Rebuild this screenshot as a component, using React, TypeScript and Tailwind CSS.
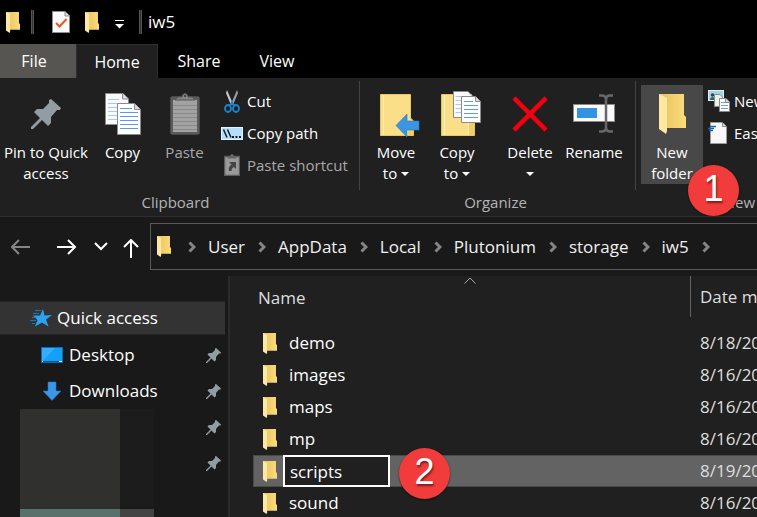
import type { ReactNode } from "react";

function Folder({ className }: { className: string }) {
  return (
    <svg viewBox="0 0 27 40" preserveAspectRatio="none" className={className} aria-hidden="true">
      <defs>
        <linearGradient id="folderBack" x1="0" x2="1" y1="0" y2="0">
          <stop offset="0.3" stopColor="#eec968" />
          <stop offset="1" stopColor="#fbdc7c" />
        </linearGradient>
      </defs>
      <path d="M0 0H25V21L27 23V34H0Z" fill="url(#folderBack)" />
      <path d="M0 0L8 4V37L7 40L0 35Z" fill="#ffe8a2" />
    </svg>
  );
}

function PinIcon({ className }: { className: string }) {
  return (
    <svg viewBox="0 0 30 30" className={className} aria-hidden="true">
      <path d="M20 0L30 9L29 11L26 11L20 18L20 24L17 27L11 21L2 30H0V28L9 19L3 13L6 10L12 10L18 4V1Z" fill="#929ca3" />
    </svg>
  );
}

function Sheets({ className }: { className: string }) {
  return (
    <svg viewBox="0 0 36 42" className={className} aria-hidden="true">
      <path d="M.5 .5H18L23.500 6V31.500H.5Z" fill="#fafafa" stroke="#8a8a8a" />
      <path d="M17.500 .5V6H23.500" fill="#ddd" stroke="#8a8a8a" />
      <path d="M3 6.500H14M3 10.500H20M3 14.500H20M3 18.500H20M3 22.500H20M3 26.500H20" stroke="#a9c9f5" />
      <path d="M12.500 10.500H29.500L35.500 16.500V41.500H12.500Z" fill="#fff" stroke="#8a8a8a" />
      <path d="M29.500 10.500V16.500H35.500" fill="#ddd" stroke="#8a8a8a" />
      <path d="M15 15.500H27M15 19.500H33M15 23.500H33M15 27.500H33M15 31.500H33M15 35.500H33" stroke="#5b97f0" strokeWidth="1.200" />
    </svg>
  );
}

function Clipboard() {
  return (
    <svg viewBox="0 0 30 42" className="h-[42px] w-[30px]" aria-hidden="true">
      <rect x=".5" y="3.500" width="29" height="38" rx="2" fill="#5b5b5b" stroke="#484848" />
      <rect x="3" y="7" width="24" height="32" fill="#a2a2a2" />
      <path d="M3 12.500H27M3 16.500H27M3 20.500H27M3 24.500H27M3 28.500H27M3 32.500H27M3 36.500H27" stroke="#888" />
      <path d="M5 7L8 4H12C12 -.5 18 -.5 18 4H22L25 7Z" fill="#858585" stroke="#555" />
      <circle cx="15" cy="3" r="1" fill="#333" />
    </svg>
  );
}

function Scissors() {
  return (
    <svg viewBox="0 0 16 23" className="h-[23px] w-4" aria-hidden="true">
      <path d="M3 0L9 14L7 15L2 3Z" fill="#c4c8cc" />
      <path d="M13 0L7 14L9 15L14 3Z" fill="#9aa0a6" />
      <g fill="none" stroke="#1a84cf" strokeWidth="1.800">
        <ellipse cx="4" cy="18.500" rx="3" ry="3.500" />
        <ellipse cx="12" cy="18.500" rx="3" ry="3.500" />
        <path d="M6 16L8 12L10 16" />
      </g>
    </svg>
  );
}

function PathIcon() {
  return (
    <svg viewBox="0 0 22 13" className="h-[13px] w-[22px]" aria-hidden="true">
      <rect x=".5" y=".5" width="21" height="12" fill="#b5defb" stroke="#e3f4ff" />
      <path d="M2.500 2.500L6 10.500M6.500 2.500L10 10.500" stroke="#10202c" strokeWidth="1.500" />
      <path d="M11 9H13V11H11ZM14.500 9H16.500V11H14.500ZM18 9H20V11H18Z" fill="#10202c" />
    </svg>
  );
}

function ShortcutIcon() {
  return (
    <svg viewBox="0 0 16 22" className="h-[22px] w-4" aria-hidden="true">
      <rect x=".5" y="2.500" width="15" height="19" fill="#9a9a9a" stroke="#5d5d5d" strokeWidth="1.500" />
      <path d="M3 4.500L5 2H6C6 -.5 10 -.5 10 2H11L13 4.500Z" fill="#666" />
      <path d="M5 8H12V15L10 13C8 14 7.500 15 7.500 17H5C4 14 5.500 12 7.500 10.500Z" fill="#454545" />
    </svg>
  );
}

function FolderSheet({ children }: { children: ReactNode }) {
  return (
    <svg viewBox="0 0 42 46" className="ml-2 h-[46px] w-[42px] shrink-0" aria-hidden="true">
      <path d="M1.500 3.500H31.500V27L34.500 30V44.500H1.500Z" fill="#fbdf88" stroke="#e8c664" />
      <path d="M4.500 4V44M28.500 30V44" stroke="#fff0bd" />
      <path d="M29 31H34V44H29Z" fill="#f3cc68" />
      {children}
    </svg>
  );
}

function MoveIcon() {
  return (
    <FolderSheet>
      <path d="M17 34.500L28 23V30H40V39H28V46Z" fill="#3a96e0" stroke="#2a7dc2" strokeWidth=".6" />
    </FolderSheet>
  );
}

function CopyToIcon() {
  return (
    <FolderSheet>
      <path d="M13.500 .5H28L32.500 5V26.500H13.500Z" fill="#fafafa" stroke="#8a8a8a" />
      <path d="M15.500 5.500H25M15.500 9.500H30M15.500 13.500H30M15.500 17.500H30M15.500 21.500H30" stroke="#a9c9f5" />
      <path d="M21.500 5.500H35.500L40.500 10.500V31.500H21.500Z" fill="#fff" stroke="#8a8a8a" />
      <path d="M35.500 5.500V10.500H40.500" fill="#ddd" stroke="#8a8a8a" />
      <path d="M24 10.500H33M24 14.500H38M24 18.500H38M24 22.500H38M24 26.500H38" stroke="#5b97f0" />
    </FolderSheet>
  );
}

function DeleteIcon() {
  return (
    <svg viewBox="0 0 36 36" className="h-9 w-9" aria-hidden="true">
      <path d="M2 2L34 34M34 2L2 34" stroke="#a5000c" strokeWidth="5" />
      <path d="M2 2L34 34M34 2L2 34" stroke="#ec0412" strokeWidth="4" />
    </svg>
  );
}

function RenameIcon() {
  return (
    <svg viewBox="0 0 42 39" className="h-[39px] w-[42px]" aria-hidden="true">
      <rect x=".5" y="10.500" width="41" height="17" fill="#fafafa" stroke="#8a8a8a" />
      <rect x="4" y="14" width="20" height="10" fill="#3393e3" />
      <path d="M26 1.500H29C32 1.500 33 3 33 6V33C33 36 32 37.500 29 37.500H26M40 1.500H37C34 1.500 33 3 33 6M33 33C33 36 34 37.500 37 37.500H40" fill="none" stroke="#686868" strokeWidth="2.500" />
    </svg>
  );
}

function NewItemIcon() {
  return (
    <svg viewBox="0 0 22 22" className="h-[22px] w-[22px]" aria-hidden="true">
      <rect x=".5" y=".5" width="15" height="10" fill="#9fd4ee" stroke="#e3edf2" />
      <path d="M2 10C2 6 7 6 7 10Z" fill="#2d6a4c" />
      <circle cx="4.500" cy="5" r="1.700" fill="#4d3b2d" />
      <path d="M6.500 4.500H12L14.500 7V16.500H6.500Z" fill="#eee" stroke="#8a8a8a" />
      <path d="M11.500 8.500H18L21.500 12V21.500H11.500Z" fill="#fff" stroke="#8a8a8a" />
      <path d="M13 12.500H18M13 15.500H20M13 18.500H20" stroke="#6d9ce0" />
      <path d="M17.500 8.500V12.500H21.500" fill="#ddd" stroke="#8a8a8a" />
    </svg>
  );
}

function EasyAccessIcon() {
  return (
    <svg viewBox="0 0 22 22" className="h-[22px] w-[22px]" aria-hidden="true">
      <path d="M2.500 .5H14L18.500 5V21.500H2.500Z" fill="#f7f7f7" stroke="#9a9a9a" />
      <path d="M14.500 .5V4.500H18.500" fill="#ddd" stroke="#8a8a8a" />
      <path d="M2 4.500H8M0 6.500H6M1 8.500H5" stroke="#1467b4" strokeWidth="1.300" />
    </svg>
  );
}

function Caret() {
  return (
    <svg viewBox="0 0 8 4" className="h-1 w-2" aria-hidden="true">
      <path d="M0 0H8L4 4Z" fill="#fff" />
    </svg>
  );
}

function Crumb() {
  return (
    <svg viewBox="0 0 8 12" className="ml-[13px] mr-3 h-3 w-2 shrink-0" aria-hidden="true">
      <path d="M1.500 1.500L6 6L1.500 10.500" fill="none" stroke="#858585" strokeWidth="3" />
    </svg>
  );
}

function BigButton({ icon, className, children }: { icon: ReactNode; className: string; children: ReactNode }) {
  return (
    <button className={`flex h-[99px] shrink-0 flex-col items-center whitespace-nowrap text-[15px] leading-[21px] ${className}`}>
      <span className="flex h-[57px] w-full items-center justify-center">{icon}</span>
      {children}
    </button>
  );
}

function SmallButton({ icon, children, muted }: { icon: ReactNode; children: ReactNode; muted?: boolean }) {
  return (
    <button className={`flex h-8 items-center gap-1 whitespace-nowrap text-[15px] ${muted ? "text-[#a9a9a9]" : "text-white"}`}>
      <span className="flex w-[22px] justify-center">{icon}</span>
      {children}
    </button>
  );
}

function Group({ label, className, children }: { label: string; className: string; children: ReactNode }) {
  return (
    <section aria-label={label} className={`flex shrink-0 flex-col ${className}`}>
      <div className="flex">{children}</div>
      <div className="pt-2 text-center text-[15px] leading-[21px] text-[#b4b4b4]">{label}</div>
    </section>
  );
}

function GroupLine() {
  return <div className="-mt-1 h-[109px] w-px shrink-0 bg-[#434343]" />;
}

function Badge({ className, children }: { className: string; children: ReactNode }) {
  return (
    <span className={`absolute z-10 flex size-[51px] items-center justify-center rounded-full bg-[#f23b3b] pb-1 font-['Liberation_Sans',sans-serif] text-4xl text-white shadow-[0_1px_2px_rgba(0,0,0,0.6)] [text-shadow:1px_2px_2px_rgba(0,0,0,0.5)] ${className}`}>
      {children}
    </span>
  );
}

const crumbs = ["User", "AppData", "Local", "Plutonium", "storage", "iw5"];

const files = [
  { name: "demo", date: "8/18/2021" },
  { name: "images", date: "8/16/2021" },
  { name: "maps", date: "8/16/2021" },
  { name: "mp", date: "8/16/2021" },
  { name: "scripts", date: "8/19/2021", editing: true },
  { name: "sound", date: "8/16/2021" },
];

function TitleBar() {
  return (
    <header className="flex h-11 shrink-0 items-center bg-black pl-[6px]">
      <Folder className="h-[21px] w-[14px]" />
      <div className="ml-[11px] h-6 w-[3px] border-x border-[#555] bg-[#303030]" />
      <button aria-label="Properties" className="ml-[18px]">
        <svg viewBox="0 0 18 22" className="h-[22px] w-[18px]" aria-hidden="true">
          <path d="M.5 .5H13L17.500 5V21.500H.5Z" fill="#fafafa" stroke="#8f8f8f" />
          <path d="M13 .5V5H17.500" fill="#ddd" stroke="#8f8f8f" />
          <path d="M4 12L7.500 15.500L14.500 8" fill="none" stroke="#e9591d" strokeWidth="2" />
        </svg>
      </button>
      <button aria-label="New folder" className="ml-[15px]">
        <Folder className="h-[21px] w-[14px]" />
      </button>
      <button aria-label="Customize toolbar" className="ml-[15px]">
        <svg viewBox="0 0 11 9" className="mt-1 h-[9px] w-[11px]" aria-hidden="true">
          <path d="M1 .5H10" stroke="#fff" />
          <path d="M1 4H10L5.500 8.500Z" fill="#fff" />
        </svg>
      </button>
      <div className="ml-[14px] h-6 w-[3px] border-x border-[#555] bg-[#303030]" />
      <h1 className="ml-[6px] text-[17px]">iw5</h1>
    </header>
  );
}

function Ribbon() {
  return (
    <div className="flex h-[139px] shrink-0 overflow-hidden border-b border-[#2e2e2e] bg-[#202020] pt-[7px]">
      <Group label="Clipboard" className="mr-2 w-[351px]">
        <BigButton className="w-[92px]" icon={<PinIcon className="h-[30px] w-[30px]" />}>
          <span>Pin to Quick</span>
          <span>access</span>
        </BigButton>
        <BigButton className="w-[61px]" icon={<Sheets className="h-[42px] w-9" />}>Copy</BigButton>
        <BigButton className="w-[63px] text-[#a9a9a9]" icon={<Clipboard />}>Paste</BigButton>
        <div className="ml-[5px]">
          <SmallButton icon={<Scissors />}>Cut</SmallButton>
          <SmallButton icon={<PathIcon />}>Copy path</SmallButton>
          <SmallButton muted icon={<ShortcutIcon />}>Paste shortcut</SmallButton>
        </div>
      </Group>
      <GroupLine />
      <Group label="Organize" className="mr-1 w-[271px]">
        <BigButton className="ml-[5px] w-[62px]" icon={<MoveIcon />}>
          <span>Move</span>
          <span className="flex items-center gap-1">to <Caret /></span>
        </BigButton>
        <BigButton className="w-[60px]" icon={<CopyToIcon />}>
          <span>Copy</span>
          <span className="flex items-center gap-1">to <Caret /></span>
        </BigButton>
        <div className="mx-2 mt-1 h-[91px] w-[2px] bg-[#5f5f5f]" />
        <BigButton className="w-[54px]" icon={<DeleteIcon />}>
          <span>Delete</span>
          <span className="flex h-[21px] items-center"><Caret /></span>
        </BigButton>
        <BigButton className="w-[74px]" icon={<RenameIcon />}>Rename</BigButton>
      </Group>
      <GroupLine />
      <Group label="New" className="w-[202px] pl-[5px]">
        <div className="relative">
          <BigButton className="w-[62px] bg-[#484848]" icon={<Folder className="h-10 w-[27px]" />}>
            <span>New</span>
            <span>folder</span>
          </BigButton>
          <Badge className="left-[47px] top-20">1</Badge>
        </div>
        <div className="ml-[5px]">
          <SmallButton icon={<NewItemIcon />}>New item <Caret /></SmallButton>
          <SmallButton icon={<EasyAccessIcon />}>Easy access <Caret /></SmallButton>
        </div>
      </Group>
    </div>
  );
}

function AddressBar() {
  return (
    <div className="flex h-[59px] shrink-0 items-center pl-[11px]">
      <button aria-label="Back">
        <svg viewBox="0 0 20 16" className="h-4 w-5" fill="none" stroke="#858585" strokeWidth="2" aria-hidden="true">
          <path d="M1 8H19M8 1L1 8L8 15" />
        </svg>
      </button>
      <button aria-label="Forward" className="ml-[26px]">
        <svg viewBox="0 0 20 16" className="h-4 w-5" fill="none" stroke="#fff" strokeWidth="2" aria-hidden="true">
          <path d="M0 8H18M11 1L18 8L11 15" />
        </svg>
      </button>
      <button aria-label="Recent locations" className="ml-[17px]">
        <svg viewBox="0 0 14 9" className="h-[9px] w-[14px]" fill="none" stroke="#fff" strokeWidth="2" aria-hidden="true">
          <path d="M1 1L7 7L13 1" />
        </svg>
      </button>
      <button aria-label="Up" className="ml-[15px]">
        <svg viewBox="0 0 16 19" className="mt-[3px] h-[19px] w-4" fill="none" stroke="#fff" strokeWidth="2" aria-hidden="true">
          <path d="M8 19V1M1 8L8 1L15 8" />
        </svg>
      </button>
      <nav aria-label="Address" className="-mr-px ml-[11px] flex h-[47px] min-w-0 flex-1 items-center overflow-hidden border border-[#5a5a5a] pl-[6px]">
        <Folder className="mr-1 h-[21px] w-[14px] shrink-0" />
        {crumbs.map((c) => (
          <span key={c} className="flex items-center">
            <Crumb />
            <a href="#" className="text-[17px] text-[#f0f0f0]">{c}</a>
          </span>
        ))}
        <Crumb />
      </nav>
    </div>
  );
}

function NavPin() {
  return <PinIcon className="mr-[7px] h-[15px] w-[15px]" />;
}

function Sidebar() {
  return (
    <aside className="flex w-[230px] shrink-0 flex-col border-r-2 border-[#2b2b2b] pt-[25px] text-[17px]">
      <a href="#" className="mr-[3px] flex h-[34px] shrink-0 items-center border-y border-[#272727] bg-[#333] pl-[30px]">
        <svg viewBox="0 0 22 18" className="mr-[5px] h-[18px] w-[22px]" aria-hidden="true">
          <path d="M13 0L14.500 6.500L22 6L16 10.500L18.500 17.500L12 13.500L5 17.500L7.500 11L3 6.500L10 6.500Z" fill="#2aa3f3" />
          <path d="M5 1.500H11M3 4.500H9M2 8.500H6M0 11.500H6M2 14.500H5" stroke="#1976b8" strokeWidth="1" />
        </svg>
        Quick access
      </a>
      <a href="#" className="mt-[2px] flex h-9 shrink-0 items-center pl-[41px]">
        <svg viewBox="0 0 22 16" className="mr-[6px] h-4 w-[22px]" aria-hidden="true">
          <rect x=".5" y=".5" width="21" height="15" fill="#12a0fb" stroke="#0a6cb5" />
          <path d="M1 15L14 1H1Z" fill="#35aefd" />
          <path d="M1 14.500H21" stroke="#075792" />
          <path d="M1 14.500H2M18 14.500H21" stroke="#fff" />
        </svg>
        <span className="flex-1">Desktop</span>
        <NavPin />
      </a>
      <a href="#" className="flex h-9 shrink-0 items-center pl-[41px]">
        <svg viewBox="0 0 20 20" className="mx-px mr-[7px] h-5 w-5" aria-hidden="true">
          <path d="M6 1H14V10H19L10 19.500L1 10H6Z" fill="#3a97e8" stroke="#2675bd" strokeWidth=".6" />
        </svg>
        <span className="flex-1">Downloads</span>
        <NavPin />
      </a>
      <div className="flex flex-1 justify-between pl-5">
        <div className="grid grid-cols-[100px_34px] grid-rows-[100px_1fr]">
          <div className="bg-[#30302e]" />
          <div className="bg-[#1c1c1c]" />
          <div className="bg-[#5a706b]" />
          <div className="bg-[#434343]" />
        </div>
        <div>
          <div className="flex h-9 items-center"><NavPin /></div>
          <div className="flex h-9 items-center"><NavPin /></div>
        </div>
      </div>
    </aside>
  );
}

function FileList() {
  return (
    <main className="min-w-0 flex-1 overflow-hidden bg-[#202020] pl-[23px] text-[17px]">
      <table className="w-full min-w-[640px] table-fixed border-separate border-spacing-0 whitespace-nowrap text-left">
        <thead>
          <tr className="h-[51px] align-top text-[#dedede]">
            <th className="w-[437px] p-0 font-normal">
              <button className="flex w-full flex-col items-start pl-[5px]">
                <svg viewBox="0 0 12 7" className="mr-2 mt-px h-[7px] w-3 self-center" fill="none" stroke="#aaa" aria-hidden="true">
                  <path d="M.5 6.500L6 1L11.500 6.500" />
                </svg>
                <span className="leading-7">Name</span>
              </button>
            </th>
            <th className="p-0 font-normal">
              <button className="flex h-[41px] items-center border-l border-[#636363] pl-[9px]">Date modified</button>
            </th>
          </tr>
        </thead>
        <tbody>
          {files.map((f) => (
            <tr key={f.name} className={`h-8 ${f.editing ? "bg-[#636363]" : ""}`}>
              <td className={`p-0 ${f.editing ? "border-y border-l border-[#4a4a4a]" : ""}`}>
                <div className={`relative flex items-center text-white ${f.editing ? "h-[30px] pl-[9px]" : "h-8 pl-[10px]"}`}>
                  <Folder className="h-[21px] w-[14px]" />
                  {f.editing ? (
                    <>
                      <input aria-label="Folder name" defaultValue={f.name} className="ml-[6px] h-8 w-[107px] border-2 border-white bg-[#202020] pl-[5px] text-white outline-none" />
                      <Badge className="left-[145px] top-[-8px]">2</Badge>
                    </>
                  ) : (
                    <span className="ml-3">{f.name}</span>
                  )}
                </div>
              </td>
              <td className={`p-0 pl-[10px] text-[#dedede] ${f.editing ? "border-y border-[#4a4a4a]" : ""}`}>{f.date}</td>
            </tr>
          ))}
        </tbody>
      </table>
    </main>
  );
}

export default function App() {
  return (
    <div className="flex h-screen flex-col overflow-hidden bg-[#191919] font-['Open_Sans','Noto_Sans',sans-serif] text-white">
      <TitleBar />
      <div role="tablist" className="flex h-[34px] shrink-0 bg-black text-[16px]">
        <button role="tab" className="w-[76px] bg-[#575551] pr-2">File</button>
        <button role="tab" aria-selected="true" className="w-[82px] border-x border-t border-[#2e2e2e] bg-[#202020]">Home</button>
        <button role="tab" className="w-[82px]">Share</button>
        <button role="tab" className="w-[74px]">View</button>
      </div>
      <Ribbon />
      <AddressBar />
      <div className="flex min-h-0 flex-1">
        <Sidebar />
        <FileList />
      </div>
    </div>
  );
}
